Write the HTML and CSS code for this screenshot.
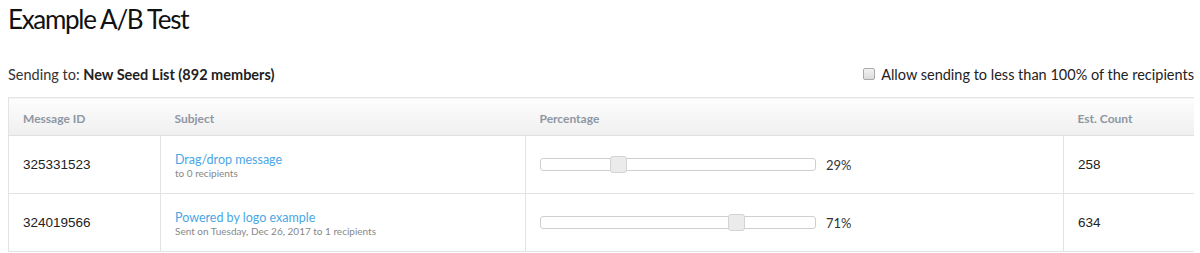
FILE: index.html
```html
<!DOCTYPE html>
<html>
<head>
<meta charset="utf-8">
<link rel="stylesheet" href="styles.css">
</head>
<body>
<h1 class="title">Example A/B Test</h1>
<div class="bar">
  <div class="sending">Sending to: <strong>New Seed List (892 members)</strong></div>
  <label class="allow"><span class="cb"></span>Allow sending to less than 100% of the recipients</label>
</div>
<table class="grid">
  <colgroup>
    <col class="c1"><col class="c2"><col class="c3"><col class="c4">
  </colgroup>
  <thead>
    <tr><th>Message ID</th><th>Subject</th><th>Percentage</th><th>Est. Count</th></tr>
  </thead>
  <tbody>
    <tr>
      <td class="num">325331523</td>
      <td><a class="subj">Drag/drop message</a><div class="meta">to 0 recipients</div></td>
      <td><div class="pct"><div class="track"><span class="thumb" style="left:69px"></span></div><span class="val">29%</span></div></td>
      <td class="num">258</td>
    </tr>
    <tr>
      <td class="num">324019566</td>
      <td><a class="subj">Powered by logo example</a><div class="meta">Sent on Tuesday, Dec 26, 2017 to 1 recipients</div></td>
      <td><div class="pct"><div class="track"><span class="thumb" style="left:187px"></span></div><span class="val">71%</span></div></td>
      <td class="num">634</td>
    </tr>
  </tbody>
</table>
</body>
</html>
```
FILE: styles.css
```css
body {
  margin: 0 6px 0 8px;
  font-family: Lato, "Open Sans", sans-serif;
  color: #222;
  background: #fff;
}
.title {
  margin: 0;
  padding-top: 3px;
  font-size: 26px;
  font-weight: 400;
  letter-spacing: -1.3px;
  line-height: 32px;
  color: #111;
}
.bar {
  display: flex;
  justify-content: space-between;
  align-items: center;
  margin-top: 29px;
  height: 20px;
  font-size: 14.5px;
}
.sending { color: #333; }
.sending strong { font-weight: 700; color: #222; }
.allow {
  display: flex;
  align-items: center;
  gap: 6px;
  color: #222;
}
.cb {
  width: 10px;
  height: 10px;
  border: 1px solid #aaa;
  border-radius: 2px;
  background: linear-gradient(#f2f2f2, #dcdcdc);
}
.grid {
  margin-top: 13px;
  width: 1186px;
  border-collapse: collapse;
  table-layout: fixed;
  border: 1px solid #e3e3e3;
}
.c1 { width: 152px; }
.c2 { width: 365px; }
.c3 { width: 538px; }
.c4 { width: 131px; }
th {
  height: 34px;
  padding: 3px 14px 0;
  text-align: left;
  font-size: 12px;
  font-weight: 700;
  color: #8e97a2;
  background: linear-gradient(#fdfdfd, #efefef);
  border-bottom: 1px solid #e0e0e0;
}
td {
  height: 57px;
  padding: 0 14px;
  border: 1px solid #e3e3e3;
  vertical-align: middle;
  font-size: 13px;
}
.num {
  font-family: "Liberation Sans", Arial, sans-serif;
  color: #222;
  font-size: 13.5px;
}
.subj {
  color: #4ba6e4;
  font-size: 12.5px;
  text-decoration: none;
}
.meta {
  margin-top: 0;
  font-size: 10px;
  color: #888;
}
.pct {
  display: flex;
  align-items: center;
  gap: 10px;
}
.track {
  position: relative;
  width: 274px;
  height: 11px;
  border: 1px solid #cfcfcf;
  border-radius: 3px;
  background: #fff;
}
.thumb {
  position: absolute;
  top: -3px;
  width: 15px;
  height: 15px;
  border: 1px solid #d3d3d3;
  border-radius: 3px;
  background: #ebebeb;
}
.val { color: #333; font-size: 13px; }
```
